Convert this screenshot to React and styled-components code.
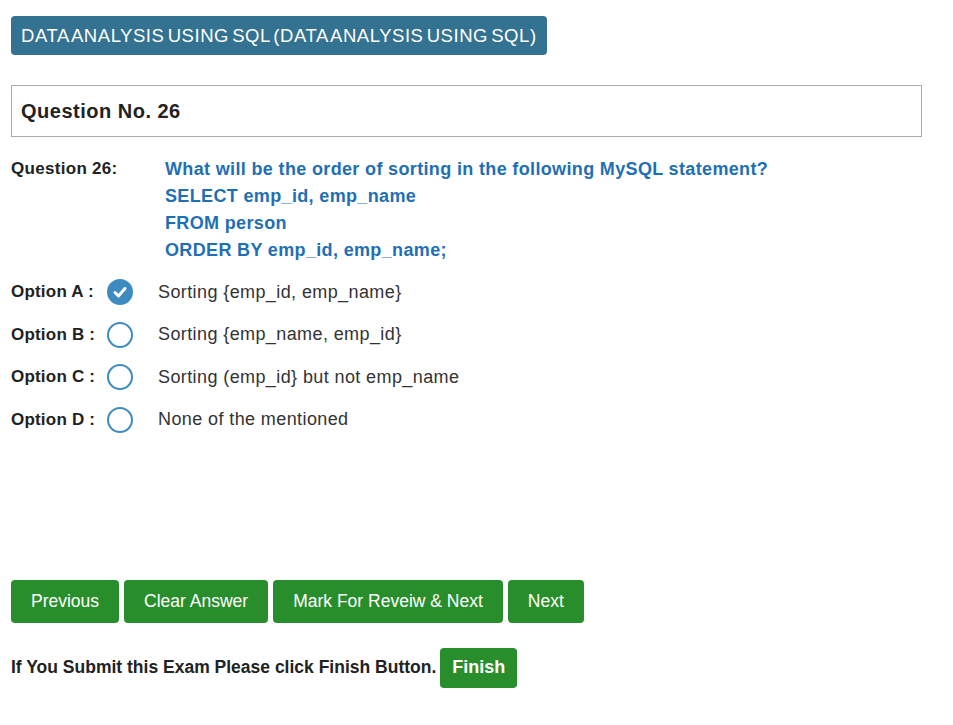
import React from "react";
import styled, { createGlobalStyle } from "styled-components";

const Global = createGlobalStyle`
  body {
    margin: 0;
    background: #fff;
    font-family: "Liberation Sans", Arial, sans-serif;
    color: #333;
  }
`;

const Page = styled.div`
  width: 911px;
  padding: 16px 0 0 11px;
`;

const Subject = styled.div`
  display: inline-block;
  background: #337290;
  color: #fff;
  font-size: 18.5px;
  letter-spacing: 0.55px;
  word-spacing: -2.5px;
  line-height: 39px;
  height: 39px;
  padding: 0 10px;
  border-radius: 4px;
`;

const QBox = styled.div`
  margin-top: 30px;
  border: 1px solid #aaa;
  height: 50px;
  display: flex;
  align-items: center;
  padding-left: 9px;
  font-size: 20px;
  letter-spacing: 0.5px;
  font-weight: bold;
  color: #222;
`;

const QRow = styled.div`
  display: flex;
  margin-top: 19px;
`;

const QLabel = styled.div`
  width: 154px;
  font-size: 17px;
  letter-spacing: 0.3px;
  font-weight: bold;
  color: #222;
  line-height: 27px;
  margin-top: -1px;
`;

const QText = styled.div`
  color: #1f6fb5;
  font-size: 18px;
  letter-spacing: 0.35px;
  font-weight: bold;
  line-height: 27px;
`;

const Options = styled.div`
  margin-top: 15px;
  display: flex;
  flex-direction: column;
  gap: 16.5px;
`;

const OptRow = styled.div`
  display: flex;
  align-items: center;
  height: 26px;
`;

const OptLabel = styled.div`
  width: 96px;
  font-size: 17px;
  letter-spacing: 0.2px;
  font-weight: bold;
  color: #222;
`;

const Radio = styled.div`
  width: 26px;
  height: 26px;
  box-sizing: border-box;
  border-radius: 50%;
  border: 2px solid #3d8bbf;
  background: ${(p) => (p.checked ? "#3d8bbf" : "#fff")};
  display: flex;
  align-items: center;
  justify-content: center;
  margin-right: 25px;
`;

const OptText = styled.div`
  font-size: 18px;
  letter-spacing: 0.4px;
  color: #333;
`;

const Buttons = styled.div`
  display: flex;
  gap: 5px;
  margin-top: 147px;
`;

const Btn = styled.button`
  background: #288e2c;
  color: #fff;
  border: none;
  border-radius: 4px;
  height: ${(p) => (p.small ? "40px" : "43px")};
  padding: 0 ${(p) => p.pad || 20}px;
  font-family: "Liberation Sans", Arial, sans-serif;
  font-size: ${(p) => (p.small ? "18px" : "17.5px")};
  font-weight: ${(p) => (p.small ? "bold" : "normal")};
`;

const FinishRow = styled.div`
  display: flex;
  align-items: center;
  gap: 4px;
  margin-top: 25px;
  font-size: 17.5px;
  font-weight: bold;
  color: #222;
`;

const Check = () => (
  <svg width="16" height="16" viewBox="0 0 16 16">
    <path d="M3 8.5 L6.5 12 L13 4.5" fill="none" stroke="#fff" strokeWidth="3" strokeLinecap="round" strokeLinejoin="round" />
  </svg>
);

const options = [
  ["A", "Sorting {emp_id, emp_name}", true],
  ["B", "Sorting {emp_name, emp_id}", false],
  ["C", "Sorting (emp_id} but not emp_name", false],
  ["D", "None of the mentioned", false],
];

export default function App() {
  return (
    <>
      <Global />
      <Page>
        <Subject>DATA ANALYSIS USING SQL (DATA ANALYSIS USING SQL)</Subject>
        <QBox>Question No. 26</QBox>
        <QRow>
          <QLabel>Question 26:</QLabel>
          <QText>
            What will be the order of sorting in the following MySQL statement?
            <br />
            SELECT emp_id, emp_name
            <br />
            FROM person
            <br />
            ORDER BY emp_id, emp_name;
          </QText>
        </QRow>
        <Options>
          {options.map(([k, t, c]) => (
            <OptRow key={k}>
              <OptLabel>Option {k} :</OptLabel>
              <Radio checked={c}>{c && <Check />}</Radio>
              <OptText>{t}</OptText>
            </OptRow>
          ))}
        </Options>
        <Buttons>
          <Btn>Previous</Btn>
          <Btn>Clear Answer</Btn>
          <Btn>Mark For Reveiw &amp; Next</Btn>
          <Btn>Next</Btn>
        </Buttons>
        <FinishRow>
          If You Submit this Exam Please click Finish Button.
          <Btn small pad={12}>Finish</Btn>
        </FinishRow>
      </Page>
    </>
  );
}
